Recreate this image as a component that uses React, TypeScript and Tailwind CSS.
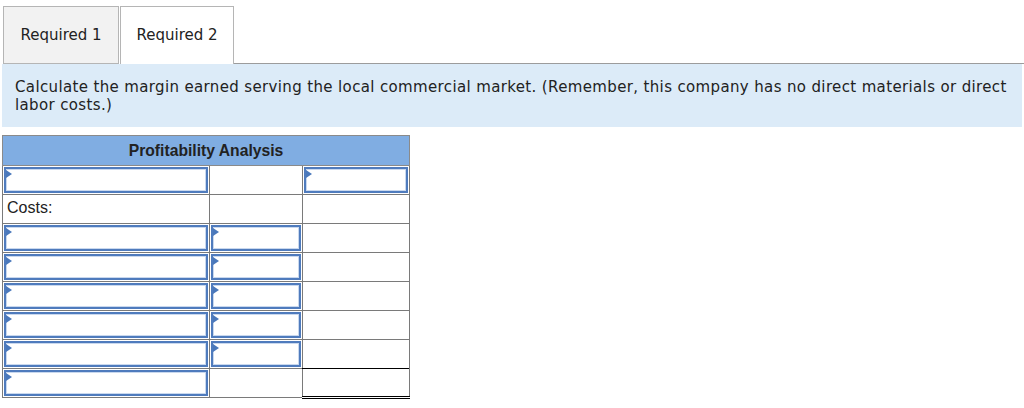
import React from "react";

const Arrow = () => (
  <svg className="absolute left-0 top-0" width="6" height="10" viewBox="0 0 6 10">
    <polygon points="0,1 6,5 0,9" fill="#4a78bb" />
  </svg>
);

const InputBox = () => (
  <div className="relative h-full w-full border-2 border-[#4f7bbd] bg-white shadow-[inset_0_0_0_1px_#c9d8ee]">
    <Arrow />
  </div>
);

type Cell = "input" | "empty" | "text";

const rows: { cells: Cell[]; label?: string; last?: boolean }[] = [
  { cells: ["input", "empty", "input"] },
  { cells: ["text", "empty", "empty"], label: "Costs:" },
  { cells: ["input", "input", "empty"] },
  { cells: ["input", "input", "empty"] },
  { cells: ["input", "input", "empty"] },
  { cells: ["input", "input", "empty"] },
  { cells: ["input", "input", "empty"] },
  { cells: ["input", "empty", "empty"], last: true },
];

export default function App() {
  return (
    <div className="h-[408px] w-[1024px] bg-white pt-[6px] font-['DejaVu_Sans',Verdana,sans-serif] text-[#222]">
      <div className="flex items-end pl-[3px]">
        <div className="flex h-[58px] w-[116px] items-center justify-center border border-[#b5b5b5] bg-[#f2f2f2] text-[15px]">
          Required 1
        </div>
        <div className="ml-[1px] flex h-[58px] w-[114px] items-center justify-center border border-b-0 border-[#b5b5b5] bg-white text-[15px]">
          Required 2
        </div>
        <div className="h-px flex-1 bg-[#9c9c9c]" />
      </div>
      <div className="mx-[2px] h-[63px] bg-[#dcebf8] pl-[13px] pr-[2px] pt-[14px] text-[15px] leading-[18px] tracking-[0.36px]">
        Calculate the margin earned serving the local commercial market. (Remember, this company has no direct materials or direct labor costs.)
      </div>
      <div className="ml-[2px] mt-[8px] w-[407px]">
        <table className="w-[407px] table-fixed border-collapse font-['Liberation_Sans',Arial,sans-serif] text-[14px]">
          <colgroup>
            <col className="w-[207px]" />
            <col className="w-[93px]" />
            <col className="w-[107px]" />
          </colgroup>
          <thead>
            <tr>
              <th colSpan={3} className="h-[30px] border border-[#8a8a8a] bg-[#80ade2] text-center text-[15.7px] font-bold text-[#222]">
                Profitability Analysis
              </th>
            </tr>
          </thead>
          <tbody>
            {rows.map((r, i) => (
              <tr key={i} className="h-[29px]">
                {r.cells.map((c, j) => {
                  let cls = "h-[29px] border border-[#7a7a7a] p-0 align-top";
                  if (r.last && j === 1) cls += " border-t-black";
                  if (r.last && j === 2) cls += " border-t-black border-b-[3px] border-b-black border-double";
                  return (
                    <td key={j} className={cls}>
                      {c === "input" && (
                        <div className="h-[28px] p-px">
                          <InputBox />
                        </div>
                      )}
                      {c === "text" && (
                        <div className="pl-[4px] pt-[4px] text-[16px] leading-[18px] text-[#222]">{r.label}</div>
                      )}
                    </td>
                  );
                })}
              </tr>
            ))}
          </tbody>
        </table>
      </div>
    </div>
  );
}
